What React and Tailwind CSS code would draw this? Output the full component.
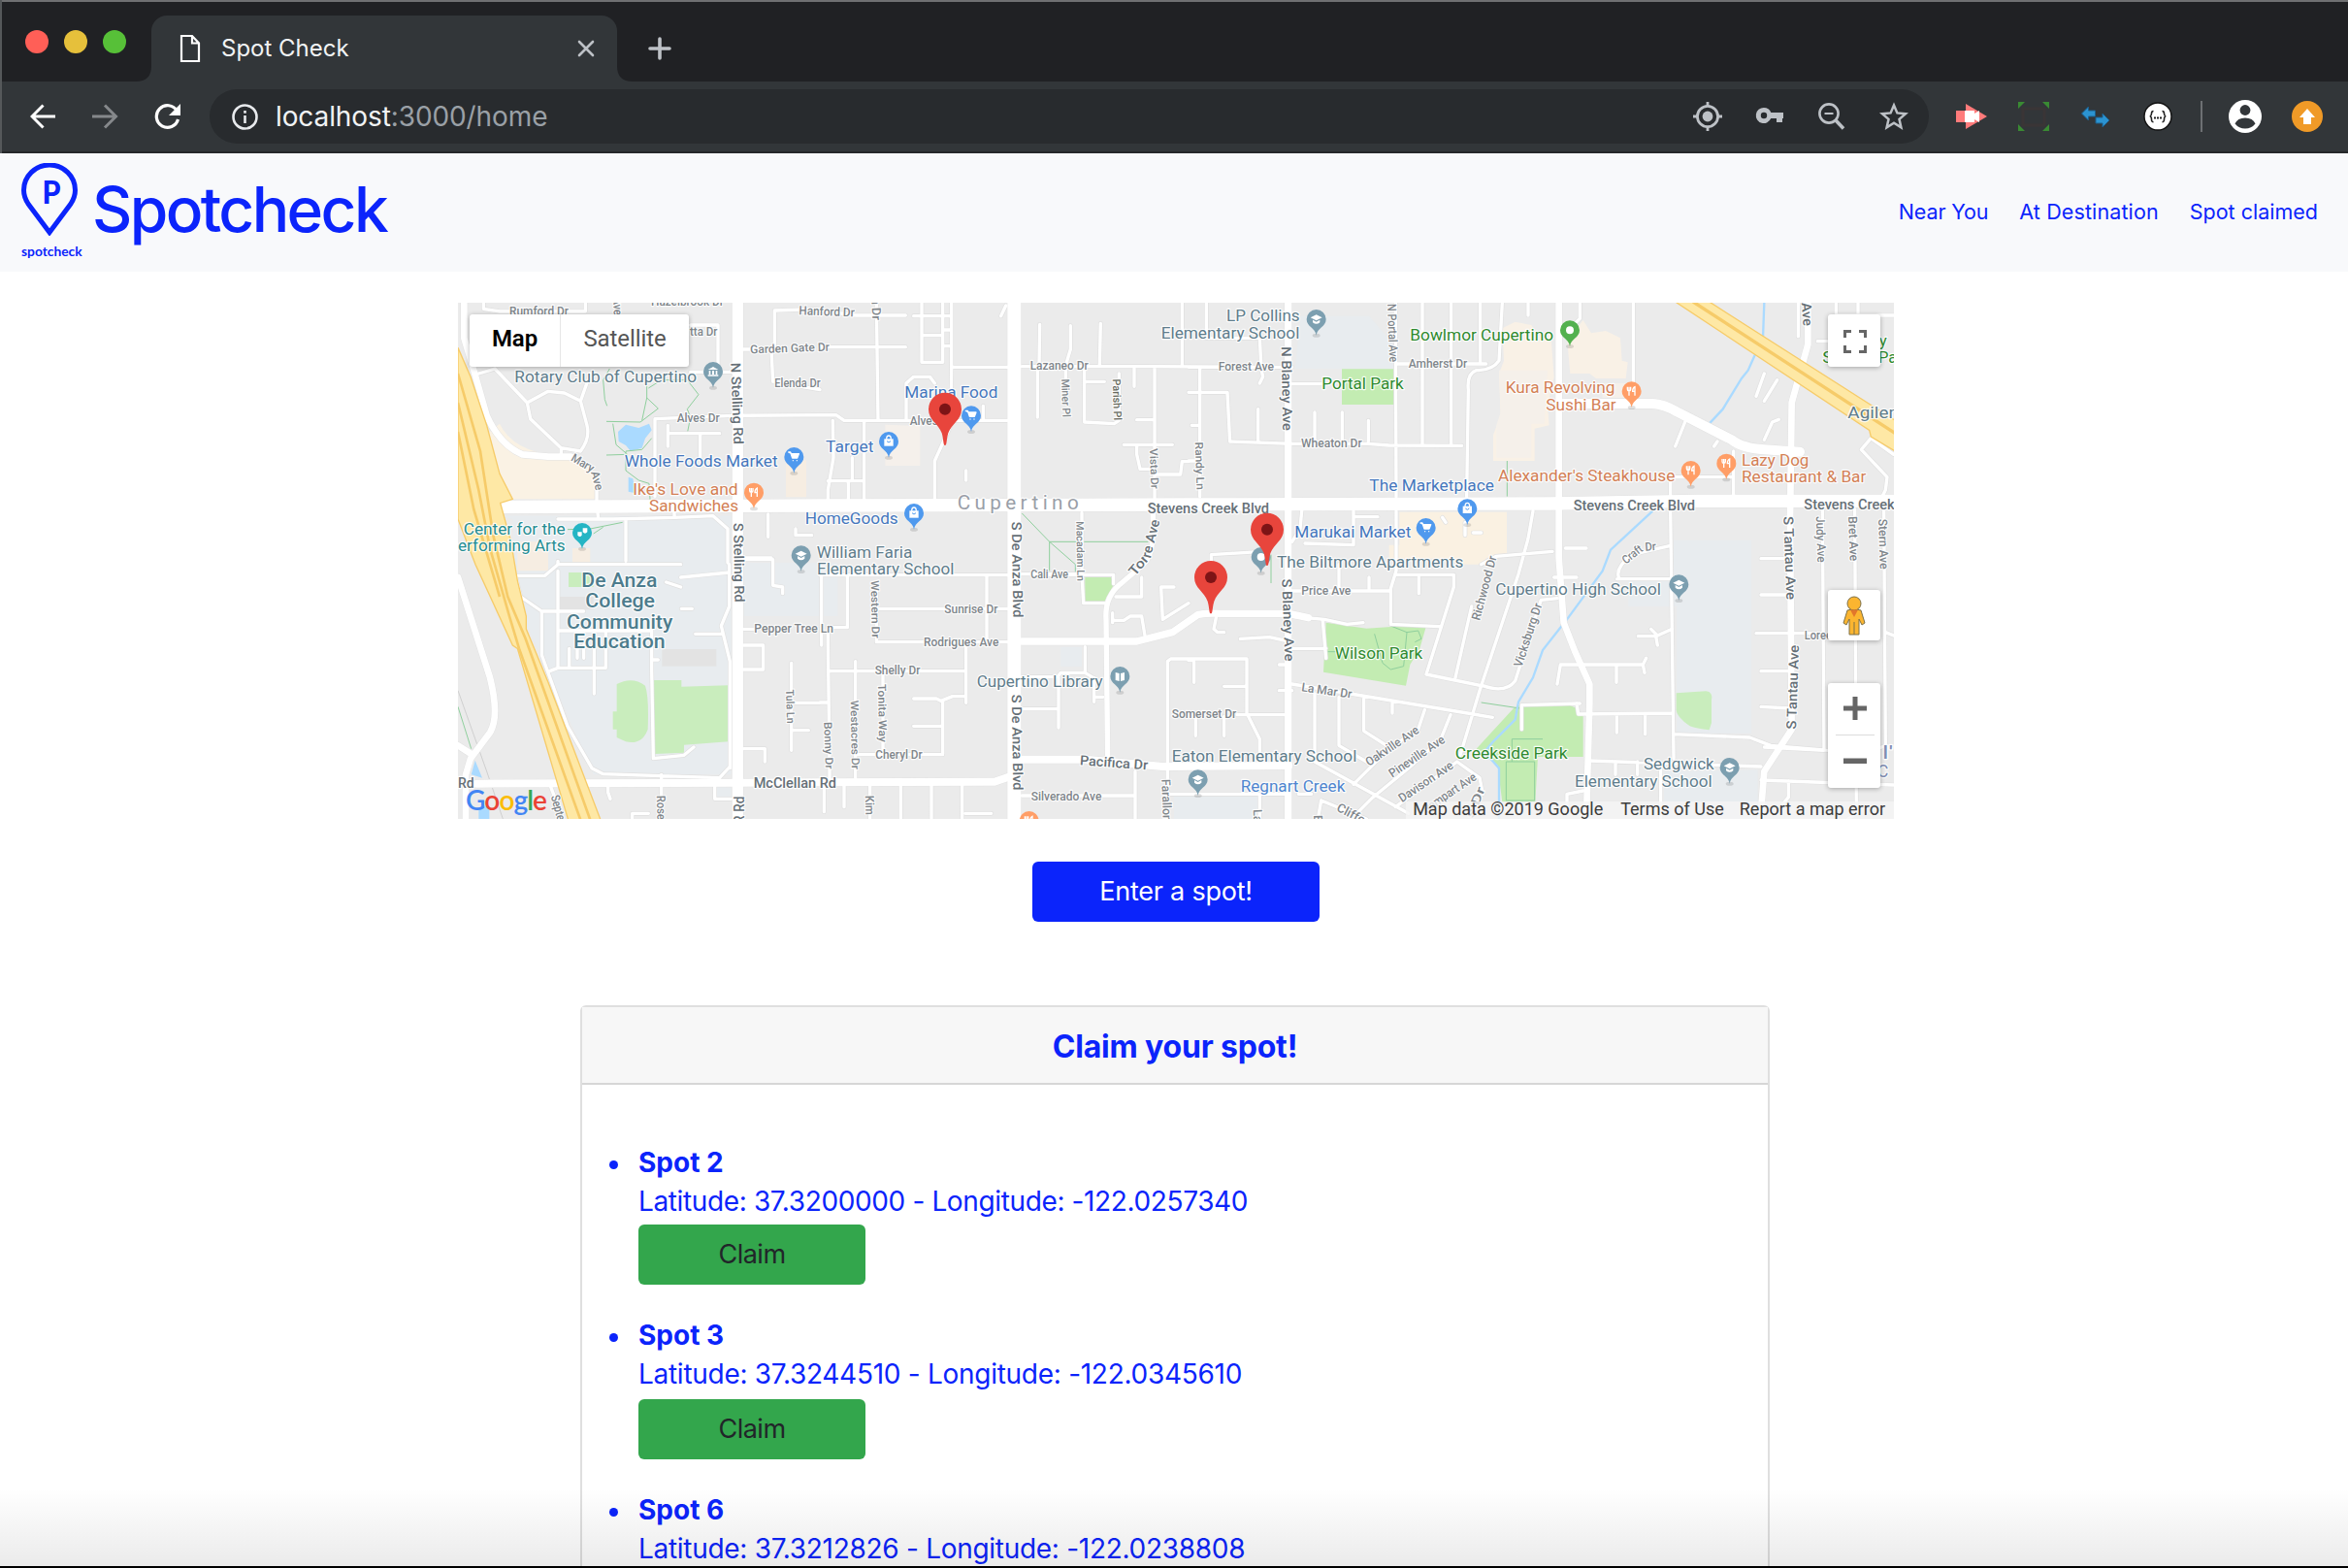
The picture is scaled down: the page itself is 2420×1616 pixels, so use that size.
import React from "react";

/* ---------- Map data, in a 3-unit-per-pixel space ---------- */

const GREY = "#80868b";
const ROAD = "#667077";
const SCHOOL = "#5f7d8c";
const SHOP = "#4577bd";
const FOOD = "#d37f55";
const PARK = "#2f8a2f";

const areas = [
  ["#e8ecef", "M150 680H865V1480H440L300 1160L200 950L190 690Z"],
  ["#e8ecef", "M905 825H1195V990H905Z M820 1512H865V1560H820Z"],
  ["#faf2e4", "M108 430L150 395Q190 480 330 495L400 500L452 560V628H190Q150 590 130 500Z"],
  ["#f6ede2", "M205 760H300V850H205Z M375 780H430V835H375Z M1035 508H1098V622H1035Z"],
  ["#aadaff", "M516 420L540 398L580 408L612 395L620 415L600 440L590 470L555 480L540 462L518 450Z M548 560L562 565L570 610L548 605Z"],
  ["#c9edbd", "M363 855H440V900H363Z M512 1200Q560 1175 600 1205Q612 1240 608 1340Q590 1390 540 1378L512 1365V1340H500V1285H512Z M622 1188H712V1208L857 1204V1378L720 1388V1412L630 1416Z"],
  ["#e3e3e3", "M652 1092H820V1145H652Z M335 930H440V970H335Z"],
  ["#aadaff", "M62 1480L74 1436L96 1490Z M85 1585L100 1575L118 1580V1617H85Z"],
  ["#f5f0eb", "M1342 398L1450 402V525H1342Z"],
  ["#c3ecb2", "M1960 870H2040L2050 890L2020 945H1960Z"],
  ["#e8ecef", "M1885 1085H1950V1145H1885Z M2235 1545H2500V1617H2235Z"],
  ["#e8ecef", "M2625 62H2838L2915 150V225H2610Z"],
  ["#c3ecb2", "M2754 226H2914V336H2754Z"],
  ["#f9f1e6", "M3250 100L3290 80L3340 90L3360 120H3400L3410 250L3390 340L3395 400L3350 410V510H3222V430L3245 370L3240 240L3255 200Z M3480 100L3500 75L3525 115L3570 108L3615 130L3620 200L3638 205L3632 255H3540L3520 240H3460L3450 130Z"],
  ["#f5f0ea", "M3240 230H3390L3380 395H3340V500H3232V400L3245 360Z M3560 270H3640V315H3560Z"],
  ["#faf1e2", "M2932 668H3264V800L3200 810V830H3110L3090 812H2900V770H2932Z"],
  ["#c3ecb2", "M2705 1010L2830 1028L2950 1020H3015L2995 1090L2965 1140L2952 1205L2697 1163Z"],
  ["#c3ecb2", "M3285 1275L3310 1262H3450L3480 1275L3500 1300V1425H3360L3352 1565H3250L3235 1450L3170 1400Z"],
  ["#e8ecef", "M3780 755H4020V1352H3790V960H3640V880H3780Z M3750 1470L4040 1465V1617H3750Z"],
  ["#c9edbd", "M3788 1228L3880 1222Q3902 1224 3897 1250V1320L3890 1342Q3850 1338 3830 1330Q3788 1300 3788 1280Z"],
];

const paths = [
  ["#8fcf9d", 3, "M490 225L470 260L475 320L482 340 M605 262L605 315L640 348L585 390L480 388 M605 315L590 385 M610 285L650 260H730L765 305L730 350L740 375L730 425 M500 395L510 460L545 490L480 492 M620 440L590 475L540 480V540L580 570L612 580L615 630 M360 722L430 720L530 700 M440 735L470 715"],
  ["#8fcf9d", 3, "M1765 672L1850 760H2155 M1850 760V850 M1850 760L1930 830V855"],
  ["#8fcf9d", 3, "M2535 800V888 M3265 510V620 M2710 1100H2740 M2855 1045L2880 1135L2905 1155L2945 1145L2955 1040L2905 1020 M2955 1040L2990 1035L3000 1060L2980 1070 M3185 1257L3305 1275 M3262 1440H3350V1560H3262Z M3280 1440V1370H3375 M21 1270L62 1400"],
  ["#aadaff", 7, "M4060 21L4056 130L4030 185L4010 230L3990 255L3932 350L3890 395 M3715 665L3585 785L3560 850L3450 1000L3375 1095L3345 1180L3300 1255L3290 1310L3220 1380L3195 1410L3240 1460L3240 1617"],
  ["#cfcfcf", 3, "M21 1220L110 1470L160 1617"],
];

const minorRoads = [
  "M100 21V40L150 48H415V21 M740 90H825V215 M890 165H1000V45L1140 40 M990 165L995 265L1140 290 M740 235H870 M85 240L135 225L235 330L300 295L350 300L400 325L430 240 M235 330L245 380L340 470L400 480Q430 440 420 400L400 325 M340 470V490 M630 620V380L870 370L1190 368L1215 385H1720",
  "M670 400V465 M670 425H830 M770 425V500 M330 690H500L690 685L810 680L855 720V825 M540 690V820 M690 680V650 M450 600V640L455 690 M980 675V745 M905 810H990 M1065 720V740H1115",
  "M200 865H290L330 830V820 M330 830H710 M200 870L215 930L280 975V1110L360 1330L435 1460L470 1478L830 1490L862 1455 M280 975H410 M330 850V1150 M330 1035H620V1160L625 1430L720 1420L750 1395 M365 1090V1150H478V1040 M305 1160L330 1150H365 M442 1050V1230 M390 1080V1120 M410 1080V1120 M860 830V960L835 1020L862 1130V1460 M835 1045H755 M712 967H745 M710 870L860 855 M665 885L710 900 M620 1125H640 M905 815H995V895L1025 900V920 M905 1030H940 M905 1080H965V1155H905 M1052 1135V1405 M1065 1258H1140 M1052 1343H1105 M905 1400H970V1440 M485 1510V1535L492 1555 M650 1480V1617 M305 1510L320 1550 M815 1500V1555H865 M560 1617V1600H610",
  "M1140 45L1250 60H1405 M1430 62H1545 M1140 158H1405 M1455 21V205H1520V21 M1455 122H1515 M1520 105H1545 M1520 155H1545 M1315 21L1320 385 M1547 21V220L1545 400L1495 510V630 M1550 220H1720 M1407 385V270L1430 250H1480L1495 270 M1180 385L1182 500L1165 600V630 M1277 390V630 M1165 572H1277 M1240 500V572 M1228 572V630 M1645 385V340 M1592 540V570 M1700 62L1715 30",
  "M1765 218H2155L2500 220 M1820 88L1818 215 M1813 215V375 M1915 92V165L1900 215V260 M2008 85L2005 215 M1958 225V390L2050 395L2065 385V240 M1965 265H2020 M2112 225V280 M2175 225V630 M2120 383H2175 M2080 460H2230 M2120 460V490L2130 535H2170 M2175 552H2255L2260 512H2280 M2260 21V218",
  "M1950 670V860H1765 M1950 860L1955 950H2020 M1820 862H2048V890 M1140 863H1720 M1145 870V1080 M1225 865V1025H1165V1070L1170 1450V1490 M1315 890V1070H1720 M1315 967H1720 M1656 867V1065 M1170 1160H1590 M1250 1130V1490 M1335 1170V1410 M1520 1415V1250L1550 1238H1590 M1592 1070V1258 M1430 1245H1500L1520 1255 M1430 1330H1515 M1255 1418H1520 M1140 1257H1165 M1153 1510V1595 M1215 1510V1580 M1295 1510V1617 M1390 1510V1617 M1485 1510V1617 M1580 1510V1617 M1590 1600H1670",
  "M1765 1178H1875L1885 1165H1960L1985 1180 M1960 1085V1165 M1878 1180V1335 M1765 1277H1878 M1988 1180V1255 M1990 1240H2015 M1765 1545H2115 M2115 1470V1617 M2215 1617V1130L2225 1122H2460V1290L2500 1370V1430 M2215 1540H2280 M2050 1003H2080L2100 990H2135L2145 1050 M2055 930H2135V870 M2195 900H2235 M2195 900L2200 1000L2280 950 M2045 980V1010",
  "M2335 21V130H2500L2505 225L2510 250L2500 270 M2280 220H2600 M2315 225V620 M2280 298H2400L2408 450L2600 457H2835L2900 462L3125 463 M2495 350V450 M2670 360V450 M2755 360V450 M2836 385V450 M2600 272H2690 M2920 21L2922 620 M3003 21V460 M3092 21V460 M3182 21V205 M2920 210H3200 M3250 21L3240 200Q3220 230 3170 230Q3140 240 3145 290L3140 620 M3330 60V21 M2290 400H2315 M2280 510H2310",
  "M2510 665V720H2560 M2630 665L2625 720L2600 760 M2790 665V770L2640 765 M2790 683H2865 M2922 665V850L2905 905V1015L3055 1022 M2922 862H3100V900L3015 1170L3185 1205 M2992 870V920 M3075 700L3065 685 M3135 700V740 M3160 732H3185 M3345 665L3330 750L3300 860L3180 1220L3120 1420 M3185 830L3230 805L3405 790 M3155 960L3105 1180 M2350 850V800L2510 790 M2590 912H2900 M2745 830V905 M2838 870V905 M2590 990L2700 1000L2770 1015L2820 1010 M2695 1005L2705 1120 M2590 1090H2705 M2440 1060L2530 1055L2590 1068 M2390 1207H2455 M2280 1127H2290 M2297 1130V1195 M2430 1295H2590 M2302 1300V1360 M2390 1300V1360 M2560 1140H2590 M2560 1220H2600 M2365 995L2358 1030L2370 1040H2390",
  "M2600 1200L3220 1303 M2670 1230V1440L2960 1600 M2745 1240V1390L2830 1440 M2822 1245V1345L2900 1395 M2910 1260V1290 M3010 1280L2990 1340L2900 1400L2790 1510 M3090 1295L3060 1370L2960 1460L2850 1550 M2920 1580L3110 1440L3180 1490L3190 1540 M2800 1600L2850 1550 M2660 1540H2620 M2280 1540H2590 M2500 1540V1617 M2690 1560L2830 1617 M2690 1560L2680 1617 M3190 1205Q3260 1230 3290 1190L3370 940L3420 935 M3310 1340V1265L3490 1260",
  "M3655 21V310 M3490 21V70L3470 90 M3815 390L3785 465 M3915 450L3905 465 M3965 480V620 M3770 560H3960 M3770 570V640 M3770 660L3780 1430 M3445 780H3510 M3605 875H3775 M3610 870Q3600 840 3650 800L3770 772 M4050 812H4140 M4050 924H4140 M4035 1043H4245 M4050 1160H4140 M4050 1270L4140 1275 M4240 660L4245 1405L4060 1395 M4340 660L4345 1600L4320 1617 M4430 660L4435 1390L4400 1405 M4165 21V125 M4225 140H4260 M4282 21V60H4460 M4350 21V60 M4060 240L4035 310 M4100 260L4060 325 M4105 382L4085 390L4060 445 M4390 440L4360 475L4440 560L4435 600L4420 630 M4390 440L4460 490 M4435 1040L4460 1050",
  "M3410 870H3480 M3710 1030L3730 1050L3775 1030 M3670 1052H3725L3730 1080 M3420 1200L3430 1140H3685L3695 1120 M3685 1140L3690 1165 M3603 1140V1195 M3480 1260L3485 1293L3775 1290 M3604 1293V1350 M3692 1293V1355 M3780 1355L4015 1365L4080 1390L4260 1405 M3520 1437L4050 1455 M3600 1440V1480 M3668 1440V1480 M3740 1450V1617 M4050 1497L4460 1512 M4135 1500V1550L4110 1580 M3450 1590V1540L3500 1530",
];

const midRoads = [
  [24, "M80 1508L1140 1504L1680 1502L1730 1485 M1765 1433H1960L2200 1455L2590 1452"],
  [20, "M40 21V130L70 230L110 370Q150 460 220 490L300 497H370 M21 870L120 1180Q150 1300 120 1350L60 1430L45 1480V1617 M21 1390L60 1415"],
  [16, "M2030 1430L2025 1000Q2020 930 2070 890L2140 830Q2175 800 2170 690V660"],
  [22, "M1765 1068H2120L2230 1040L2310 985Q2340 980 2380 982H2590L2650 995"],
  [22, "M2588 21V1617"],
  [20, "M3425 21V810L3440 1010L3475 1100L3520 1200V1260L3510 1617 M4195 21V150L4145 330L4140 700L4145 1340L4060 1470L4048 1617"],
  [30, "M3440 333H3715Q3750 335 3790 358L3960 445Q3990 470 4060 475L4170 482"],
  [34, "M886 21V1617"],
  [42, "M1741 21V1617"],
  [40, "M21 653L1140 648L2280 645L3400 642L3850 634H4461"],
];

const dr = (x, y, t, w, r = 0, s = 38) => ({ x, y, t, w, r, s, c: GREY, m: 500 });
const bl = (x, y, t, w, r = 0, s = 42) => ({ x, y, t, w, r, s, c: ROAD, m: 500 });
const poi = (x, y, t, w, c) => ({ x, y, t, w, r: 0, s: 51, c });

const labels = [
  dr(180, 60, "Rumford Dr", 183), dr(618, 29, "Hazelbrook Dr", 225), dr(506, 5, "Ave", 55, 88), dr(738, 124, "tta Dr", 85),
  dr(925, 178, "Garden Gate Dr", 245, -2, 36), dr(1075, 58, "Hanford Dr", 172, 2), dr(1000, 283, "Elenda Dr", 142), dr(698, 391, "Alves Dr", 132),
  dr(368, 508, "Mary", 76, 30, 36), dr(432, 545, "Ave", 60, 75, 36),
  bl(870, 207, "N Stelling Rd", 252, 88), bl(878, 702, "S Stelling Rd", 245, 89),
  dr(1305, 5, "n Dr", 70, 88), dr(1418, 400, "Alves Dr", 132), dr(1790, 229, "Lazaneo Dr", 180), dr(1892, 257, "Miner Pl", 118, 88, 34),
  { ...dr(2050, 257, "Parish Pl", 128, 88, 34), c: "#666a60" }, dr(2165, 472, "Vista Dr", 125, 88, 34), dr(2305, 452, "Randy Ln", 148, 88, 34),
  bl(2153, 671, "Stevens Creek Blvd", 376), bl(3470, 664, "Stevens Creek Blvd", 376), bl(4183, 659, "Stevens Creek", 280),
  bl(1738, 698, "S De Anza Blvd", 297, 89), bl(1738, 1232, "S De Anza Blvd", 297, 89), bl(2572, 157, "N Blaney Ave", 260, 89), bl(2574, 875, "S Blaney Ave", 255, 88),
  bl(2114, 868, "Tor", 70, -50), bl(2162, 812, "re Ave", 120, -76), dr(1938, 697, "Macadam Ln", 185, 89, 32),
  dr(2372, 232, "Forest Ave", 172), dr(2900, 25, "N Portal Ave", 180, 88), dr(2960, 221, "Amherst Dr", 182), dr(2628, 467, "Wheaton Dr", 188),
  bl(4180, 22, "Ave", 72, 85), bl(4125, 682, "S Tantau Ave", 258, 88), dr(4225, 682, "Judy Ave", 142, 88), dr(4325, 682, "Bret Ave", 138, 88), dr(4418, 690, "Stern Ave", 155, 88),
  dr(3632, 830, "Craft", 70, -38, 36), dr(3692, 788, "Dr", 34, -4, 36),
  dr(937, 1041, "Pepper Tree Ln", 245), dr(1040, 1217, "Tula Ln", 105, 88, 34), bl(935, 1520, "McClellan Rd", 256), bl(21, 1520, "Rd", 50),
  dr(308, 1547, "Septe", 80, 75), dr(640, 1545, "Rose", 75, 88), bl(905, 1595, "Rd", 48, -90), bl(905, 1655, "PR", 48, -90),
  dr(1303, 880, "Western Dr", 178, 89, 34), dr(1525, 980, "Sunrise Dr", 165), dr(1461, 1082, "Rodrigues Ave", 232), dr(1310, 1170, "Shelly Dr", 140),
  dr(1325, 1200, "Tonita Way", 180, 89, 34), dr(1240, 1250, "Westacres Dr", 214, 89, 34), dr(1158, 1318, "Bonny Dr", 145, 88, 34), dr(1312, 1430, "Cheryl Dr", 145), dr(1285, 1545, "Kim", 60, 88),
  dr(1792, 873, "Cali Ave", 116), dr(1793, 1560, "Silverado Ave", 218), dr(2202, 1495, "Farallone", 150, 88), bl(1943, 1450, "Pacifica Dr", 211, 4), dr(2228, 1304, "Somerset Dr", 200),
  dr(2629, 925, "Price Ave", 153), dr(2628, 1222, "La Mar Dr", 157, 8), dr(3180, 1005, "Richwood Dr", 205, -75), dr(3310, 1150, "Vicksburg Dr", 205, -72),
  dr(2838, 1455, "Oakville Ave", 190, -34), dr(2910, 1490, "Pineville Ave", 200, -34), dr(2940, 1567, "Davison Ave", 195, -34), dr(3015, 1600, "Rampart Ave", 190, -34),
  dr(3160, 1617, "s Dr", 100, -68), dr(2735, 1590, "Clifford", 130, 28), dr(2485, 1588, "La", 40, 88), dr(2672, 1606, "E", 20, 88),
  dr(4184, 1061, "Loree", 85), bl(4158, 1340, "S Tantau Ave", 260, -88),
  { x: 1565, y: 660, t: "Cupertino", w: 375, r: 0, s: 62, c: "#9a9fa8", sp: 1 },
  poi(196, 266, "Rotary Club of Cupertino", 563, SCHOOL), poi(536, 529, "Whole Foods Market", 474, SHOP),
  poi(562, 614, "Ike's Love and", 325, FOOD), poi(612, 666, "Sandwiches", 276, FOOD),
  poi(38, 737, "Center for the", 315, "#258d93"), poi(21, 790, "erforming Arts", 332, "#258d93"),
  poi(1402, 315, "Marina Food", 288, SHOP), poi(1158, 483, "Target", 148, SHOP), poi(1094, 705, "HomeGoods", 288, SHOP),
  poi(1130, 809, "William Faria", 296, SCHOOL), poi(1131, 860, "Elementary School", 424, SCHOOL),
  poi(2397, 79, "LP Collins", 227, SCHOOL), poi(2195, 131, "Elementary School", 428, SCHOOL),
  poi(2692, 289, "Portal Park", 253, PARK), poi(2965, 139, "Bowlmor Cupertino", 443, PARK),
  poi(3260, 300, "Kura Revolving", 338, FOOD), poi(3385, 353, "Sushi Bar", 217, FOOD),
  poi(3237, 573, "Alexander's Steakhouse", 547, FOOD), poi(3990, 525, "Lazy Dog", 208, FOOD), poi(3990, 576, "Restaurant & Bar", 385, FOOD),
  poi(2839, 603, "The Marketplace", 386, SHOP), poi(2608, 747, "Marukai Market", 360, SHOP), poi(2553, 840, "The Biltmore Apartments", 577, SCHOOL),
  poi(4318, 378, "Agilent", 176, SCHOOL), poi(4415, 156, "y", 24, PARK), poi(4240, 208, "Sav", 90, PARK), poi(4413, 208, "Park", 100, PARK),
  poi(3229, 925, "Cupertino High School", 512, SCHOOL), poi(1625, 1209, "Cupertino Library", 390, SCHOOL),
  poi(2228, 1440, "Eaton Elementary School", 572, SCHOOL), poi(2441, 1533, "Regnart Creek", 323, "#4f86cf"),
  poi(2732, 1123, "Wilson Park", 272, PARK), poi(3104, 1431, "Creekside Park", 348, PARK),
  poi(3687, 1464, "Sedgwick", 218, SCHOOL), poi(3474, 1517, "Elementary School", 425, SCHOOL),
  { ...poi(4425, 1430, "l'", 34, "#7f8db3"), s: 56 }, { ...poi(4410, 1487, "C", 34, "#7f8db3"), s: 56 },
  ...[["De Anza", 403, 900, 234], ["College", 415, 964, 215], ["Community", 357, 1028, 328], ["Education", 378, 1090, 284]].map(
    ([t, x, y, w]) => ({ x, y, t, w, r: 0, s: 61, c: "#4d7c8d", m: 500 })
  ),
];

const glyphs = {
  cart: <path d="M-17 -65h6l6 18h15l5 -13h-22zM-3 -39v.1M9 -39v.1" fill="#fff" stroke="#fff" strokeWidth="4" strokeLinecap="round" strokeLinejoin="round" />,
  bag: (
    <g>
      <path d="M-14 -58h28v22h-28z" fill="#fff" />
      <path d="M-7 -57q0 -11 7 -11t7 11" fill="none" stroke="#fff" strokeWidth="4" />
      <path d="M-6 -51q6 8 12 0" fill="none" stroke={"#4f99ee"} strokeWidth="3" />
    </g>
  ),
  fork: <path d="M-13 -64v8q0 5 5 5t5 -5v-8M-8 -64v27M10 -37v-27q-7 3 -7 14h7" fill="none" stroke="#fff" strokeWidth="4" />,
  cap: <path d="M-18 -55l18 -9l18 9l-18 9zM-11 -48v8q11 9 22 0v-8l-11 6z" fill="#fff" />,
  book: <path d="M-14 -62l12 3v24l-12 -3zM14 -62l-12 3v24l12 -3z" fill="#fff" />,
  bank: <path d="M-16 -56l16 -9l16 9zM-13 -53h5v12h-5zM-3 -53h6v12h-6zM8 -53h5v12h-5zM-16 -40h32v4h-32z" fill="#fff" />,
  mask: <path d="M-14 -52h13v10q-6 8 -13 0zM2 -64h14v12q-7 8 -14 0z" fill="#fff" />,
  dot: <circle cx="0" cy="-50" r="12" fill="#fff" />,
};

const BLUE = "#4f99ee";
const SLATE = "#7c9fb0";
const ORANGE = "#ff9e67";
const pins = [
  [810, 284, SLATE, "bank"], [1060, 548, BLUE, "cart"], [936, 658, ORANGE, "fork"], [405, 782, "#25b5c4", "mask"],
  [1608, 420, BLUE, "cart"], [1353, 500, BLUE, "bag"], [1431, 722, BLUE, "bag"], [1082, 852, SLATE, "cap"],
  [2675, 122, SLATE, "cap"], [3459, 156, "#53b14f", "dot"], [3650, 345, ORANGE, "fork"], [3833, 590, ORANGE, "fork"], [3943, 568, ORANGE, "fork"],
  [3142, 708, BLUE, "bag"], [3014, 767, BLUE, "cart"], [2504, 857, SLATE, "dot"], [3796, 942, SLATE, "cap"], [2068, 1226, SLATE, "book"],
  [2309, 1545, SLATE, "cap"], [3953, 1508, SLATE, "cap"], [1787, 1673, ORANGE, "fork"],
];

const markers = [[1527, 462], [2523, 834], [2349, 982]];

function MapCanvas() {
  return (
    <svg className="block h-full w-full" viewBox="21 21 4440 1596" preserveAspectRatio="none" fontFamily="Roboto, sans-serif">
      <rect x="0" y="0" width="4500" height="1650" fill="#ebebeb" />
      {areas.map(([c, d], i) => <path key={i} d={d} fill={c} />)}
      {paths.map(([c, w, d], i) => <path key={i} d={d} fill="none" stroke={c} strokeWidth={w} />)}
      <g fill="none" strokeLinecap="round" strokeLinejoin="round">
        <path d={minorRoads.join(" ")} stroke="#e0e0e0" strokeWidth="14" />
        {midRoads.map(([w, d], i) => <path key={i} d={d} stroke="#e2e2e2" strokeWidth={w + 3} />)}
        <path d={minorRoads.join(" ")} stroke="#fff" strokeWidth="10" />
        {midRoads.map(([w, d], i) => <path key={i} d={d} stroke="#fff" strokeWidth={w} />)}
      </g>
      <g stroke="#f6cb69" strokeWidth="4">
        <path fill="#fee8a5" d="M21 160L60 250L110 400L150 550L190 628L152 640L185 760L205 880L232 990V1030L300 1195L462 1620H362L205 1090L190 1080L75 830L21 690Z" />
        <path fill="none" strokeWidth="8" d="M21 240L90 480L130 740L175 930L230 1060L430 1620 M21 330L85 600L120 780L180 990L210 1090L400 1620 M21 420L70 660L150 930" />
        <path fill="#fee8a5" d="M3785 18L3890 18L4465 385V480L4390 435L4385 415Z" />
        <path fill="none" strokeWidth="10" d="M3840 18L4465 425" />
      </g>
      <g stroke="#fff" strokeOpacity=".85" strokeWidth="7" strokeLinejoin="round">
        {labels.map((l, i) => (
          <text
            key={i}
            transform={`translate(${l.r > 80 ? l.x - 5 : l.x} ${l.y}) rotate(${l.r})`}
            fontSize={l.s}
            fontWeight={l.m || 400}
            fill={l.c}
            textLength={l.w}
            lengthAdjust={l.sp ? "spacing" : "spacingAndGlyphs"}
            paintOrder="stroke"
          >
            {l.t}
          </text>
        ))}
      </g>
      {pins.map(([x, y, c, g], i) => (
        <g key={i} transform={`translate(${x} ${y})`}>
          <ellipse cx="0" cy="0" rx="12" ry="6" fill="#000" opacity=".12" />
          <path d="M0 0C-3 -24 -30 -26 -30 -50A30 30 0 1 1 30 -50C30 -26 3 -24 0 0Z" fill={c} />
          {glyphs[g]}
        </g>
      ))}
      {markers.map(([x, y], i) => (
        <g key={i} transform={`translate(${x} ${y})`}>
          <path d="M0 0C-6 0 -4 -18 -10 -38C-20 -68 -51 -78 -51 -112A51 51 0 0 1 51 -112C51 -78 20 -68 10 -38C4 -18 6 0 0 0Z" fill="#e8453c" />
          <circle cx="0" cy="-112" r="18" fill="#7d1416" />
        </g>
      ))}
    </svg>
  );
}

/* ---------- Browser chrome ---------- */

function TabStrip() {
  return (
    <div className="flex h-[84px] items-end border-t-2 border-[#6f7072] bg-[#202124]">
      <div className="flex h-[82px] w-[140px] items-center gap-4 pl-[26px]">
        <span className="h-6 w-6 shrink-0 rounded-full bg-[#ff5f57]" />
        <span className="h-6 w-6 shrink-0 rounded-full bg-[#e6c03b]" />
        <span className="h-6 w-6 shrink-0 rounded-full bg-[#57c038]" />
      </div>
      <svg className="h-4 w-4" viewBox="0 0 16 16"><path d="M16 0V16H0Q16 16 16 0Z" fill="#323639" /></svg>
      <div className="flex h-[68px] w-[480px] items-center rounded-t-2xl bg-[#323639] pl-[29px]">
        <svg className="h-[30px] w-[22px]" viewBox="0 0 22 30" fill="none" stroke="#fff" strokeWidth="2.2">
          <path d="M2 2H13L20 9.5V28H2Z M13 2V9.5H20" />
        </svg>
        <span className="ml-[21px] font-[Inter] text-[24px] leading-none whitespace-nowrap text-[#f1f3f4]">Spot Check</span>
        <svg className="mr-[23px] ml-auto h-[18px] w-[18px]" viewBox="0 0 18 18" stroke="#bdc1c6" strokeWidth="2.6" strokeLinecap="round">
          <path d="M2 2L16 16M16 2L2 16" />
        </svg>
      </div>
      <svg className="h-4 w-4" viewBox="0 0 16 16"><path d="M0 0V16H16Q0 16 0 0Z" fill="#323639" /></svg>
      <svg className="mb-[22px] ml-4 h-6 w-6" viewBox="0 0 24 24" stroke="#bdc1c6" strokeWidth="3.6" strokeLinecap="round">
        <path d="M12 2V22M2 12H22" />
      </svg>
    </div>
  );
}

function Toolbar() {
  const g = "#bdc1c6";
  return (
    <div className="flex h-[74px] items-center border-b-2 border-[#26282a] bg-[#323639]">
      <svg className="ml-[31px] h-[26px] w-[26px]" viewBox="0 0 26 26" fill="none" stroke="#fff" strokeWidth="3">
        <path d="M26 13H2.5M13.5 1.5L2 13L13.5 24.5" />
      </svg>
      <svg className="ml-[38px] h-[26px] w-[27px]" viewBox="0 0 27 26" fill="none" stroke="#85888b" strokeWidth="3">
        <path d="M0 13H24M13 1.5L24.5 13L13 24.5" />
      </svg>
      <svg className="ml-9 h-[28px] w-[30px]" viewBox="0 0 30 28" fill="none" stroke="#fff" strokeWidth="3.2">
        <path d="M24.3 8.2A11.3 11.3 0 1 0 25.5 17" />
        <path d="M28 1V13H16Z" fill="#fff" stroke="none" />
      </svg>
      <div className="ml-7 flex h-14 w-[1772px] items-center rounded-full bg-[#282b2e] pl-[23px]">
        <svg className="h-[27px] w-[27px]" viewBox="0 0 27 27" fill="none" stroke="#e8eaed" strokeWidth="2.6">
          <circle cx="13.5" cy="13.5" r="12" />
          <path d="M13.5 12V20M13.5 7V9.8" />
        </svg>
        <span className="ml-[18px] font-[Inter] text-[28px] leading-none tracking-[-0.1px] whitespace-nowrap text-[#9aa0a6]">
          <span className="text-[#f1f3f4]">localhost</span>:3000/home
        </span>
        <div className="mr-5 ml-auto flex items-center gap-8">
          <svg className="h-8 w-8" viewBox="0 0 32 32" fill="none" stroke={g} strokeWidth="2.8">
            <circle cx="16" cy="16" r="10.6" /><circle cx="16" cy="16" r="5.4" fill={g} stroke="none" />
            <path d="M16 1V6M16 26V31M1 16H6M26 16H31" />
          </svg>
          <svg className="h-8 w-8" viewBox="0 0 32 32">
            <path fillRule="evenodd" d="M10 7A8 8 0 1 0 17.2 18H23V22H29V18H30V12H17.3A8 8 0 0 0 10 7ZM10 11.8A3.2 3.2 0 1 1 10 18.2A3.2 3.2 0 1 1 10 11.8Z" fill={g} />
          </svg>
          <svg className="h-8 w-8" viewBox="0 0 32 32" fill="none" stroke={g} strokeWidth="2.6">
            <circle cx="13" cy="13" r="9.6" /><path d="M8.5 13H17.5" strokeWidth="2" /><path d="M20 20L28 28.5" strokeWidth="3.6" />
          </svg>
          <svg className="h-8 w-8" viewBox="0 0 32 32" fill="none" stroke={g} strokeWidth="2.5">
            <path d="M16 4.5L19.4 12.4L28 13.2L21.5 18.9L23.4 27.3L16 22.8L8.6 27.3L10.5 18.9L4 13.2L12.6 12.4Z" />
          </svg>
        </div>
      </div>
      <div className="ml-7 flex items-center gap-8">
        <svg className="h-8 w-8" viewBox="0 0 32 32">
          <path d="M0 10H10V3L32 16L10 29V22H0Z" fill="#ff7b7b" />
          <path d="M9 10H19V13L24 10V22L19 19V22H9Z" fill="#fff" />
        </svg>
        <svg className="h-8 w-8" viewBox="0 0 32 32">
          <path d="M0 1H7L0 8ZM32 1H25L32 8ZM0 31H7L0 24ZM32 31H25L32 24Z" fill="#3a8a33" />
          <path d="M5 8H27V25H5Z" fill="none" stroke="#3a3536" strokeWidth="3" />
        </svg>
        <svg className="h-8 w-8" viewBox="0 0 32 32" fill="#2b93d1" stroke="#1d5f8c" strokeWidth="1">
          <path d="M1.5 13L8.500 6V10H15.500V16H8.500V20Z M30 20L23 27V23H16V17H23V13Z" />
        </svg>
        <svg className="h-8 w-8" viewBox="0 0 32 32">
          <circle cx="16" cy="16" r="14" fill="#fff" stroke="#111" strokeWidth="1.4" />
          <path d="M11.5 10.5Q9.5 10.5 9.5 13T7.8 16Q9.5 16 9.5 19T11.5 21.5M20.5 10.5Q22.5 10.5 22.5 13T24.2 16Q22.5 16 22.5 19T20.5 21.5" fill="none" stroke="#222" strokeWidth="1.6" />
          <path d="M12 16.5h2v2h-2zM15 16.5h2v2h-2zM18 16.5h2v2h-2z" fill="#222" />
        </svg>
      </div>
      <span className="ml-7 h-8 w-0.5 bg-[#6d7073]" />
      <svg className="ml-[27px] h-[34px] w-[34px]" viewBox="0 0 34 34">
        <circle cx="17" cy="17" r="17" fill="#fff" />
        <circle cx="17" cy="10.5" r="5.4" fill="#323639" />
        <path d="M6.5 24.5Q9 18.5 17 18.5T27.5 24.5Q23.5 29.5 17 29.5T6.5 24.5Z" fill="#323639" />
      </svg>
      <svg className="ml-[31px] h-8 w-8" viewBox="0 0 32 32">
        <circle cx="16" cy="16" r="16" fill="#f09a27" />
        <path d="M16 8L24 17H20V24H12V17H8Z" fill="#fff" />
      </svg>
    </div>
  );
}

/* ---------- Page ---------- */

function SiteNav() {
  return (
    <header className="flex h-[122px] bg-[#f8f9fb] font-[Inter] text-[#0b24fb]">
      <div className="w-[95px] shrink-0 pt-2.5 pl-[22px]">
        <svg className="block h-[75px] w-[58px]" viewBox="0 0 58 75">
          <path d="M29 71.5L7 42Q2.5 35 2.5 28A26.5 26 0 0 1 55.500 28Q55.500 35 51 42Z" fill="none" stroke="#0b24fb" strokeWidth="5" />
          <text x="21.500" y="42" fontFamily="Lato, sans-serif" fontWeight="900" fontSize="33" fill="#0b24fb" textLength="19" lengthAdjust="spacingAndGlyphs">P</text>
        </svg>
        <div className="mt-[7px] w-fit font-[Lato] text-[13.800px] leading-[18px] font-bold whitespace-nowrap">spotcheck</div>
      </div>
      <h1 className="text-[64px] leading-[116px] font-medium tracking-[-2.600px] whitespace-nowrap">Spotcheck</h1>
      <nav className="mt-10 mr-[31px] ml-auto flex gap-8 text-[21.500px] leading-10 whitespace-nowrap">
        <a className="tracking-[-0.150px]">Near You</a>
        <a className="tracking-[0.120px]">At Destination</a>
        <a>Spot claimed</a>
      </nav>
    </header>
  );
}

function MapPanel() {
  const box = "absolute bg-white rounded-[3px] shadow-[0_1px_5px_rgba(0,0,0,0.3)]";
  return (
    <section className="relative ml-[472px] mt-8 h-[532px] w-[1480px] overflow-hidden font-[Roboto]">
      <MapCanvas />
      <div className="absolute top-3 left-3 flex h-[54px] rounded-[3px] bg-white text-[24px] leading-[51px] tracking-[-0.100px] shadow-[0_1px_5px_rgba(0,0,0,0.3)]">
        <div className="w-[94px] border-r border-[#e6e6e6] text-center font-semibold text-black">Map</div>
        <div className="w-[132px] text-center text-[#565656]">Satellite</div>
      </div>
      <div className={`${box} top-3 left-[1412px] h-[54px] w-[54px] pt-4 pl-4`}>
        <svg className="h-6 w-6" viewBox="0 0 24 24" fill="none" stroke="#666" strokeWidth="3">
          <path d="M1.500 8V1.500H8M16 1.500H22.500V8M22.500 16V22.500H16M8 22.500H1.500V16" />
        </svg>
      </div>
      <div className={`${box} top-[296px] left-[1412px] flex h-[52px] w-[54px] items-center justify-center`}>
        <svg className="h-[41px] w-[24px]" viewBox="0 0 24 41" fill="#fbb530" stroke="#7c7048" strokeWidth="1">
          <path d="M5 15Q12 12 19 15L23 28L20 30L17 24V40H7V24L4 30L1 28Z" />
          <path d="M12 27V40" />
          <circle cx="12" cy="8" r="7" />
          <path d="M8 14.500H16L12 22Z" fill="#e2762b" stroke="none" />
        </svg>
      </div>
      <div className={`${box} top-[392px] left-[1412px] flex h-[108px] w-[54px] flex-col items-center pl-0.5`}>
        <svg className="h-[53px] w-6" viewBox="0 0 24 53"><path d="M9.500 14H14.500V23.500H24V28.500H14.500V38H9.500V28.500H0V23.500H9.500Z" fill="#666" /></svg>
        <span className="h-px w-10 bg-[#dcdcdc]" />
        <svg className="h-[53px] w-6" viewBox="0 0 24 53"><path d="M0 23.500H24V29H0Z" fill="#666" /></svg>
      </div>
      <div className="absolute bottom-0.5 left-2 font-[Lato] text-[28px] leading-9 font-semibold tracking-[-0.900px]">
        <span className="text-[#4285f4]">G</span><span className="text-[#ea4335]">o</span><span className="text-[#fbbc05]">o</span>
        <span className="text-[#4285f4]">g</span><span className="text-[#34a853]">l</span><span className="text-[#ea4335]">e</span>
      </div>
      <div className="absolute right-0 bottom-0 flex h-[18px] bg-[#f5f5f5]/80 pr-[9px] text-[18px] leading-4 whitespace-nowrap text-[#3c3c3c]">
        <span className="mr-[18px] ml-[7px]">Map data ©2019 Google</span>
        <span className="mr-4">Terms of Use</span>
        <span>Report a map error</span>
      </div>
    </section>
  );
}

const spots = [
  { name: "Spot 2", lat: "37.3200000", lng: "-122.0257340", text: "tracking-[-0.370px]", gap: "mt-1" },
  { name: "Spot 3", lat: "37.3244510", lng: "-122.0345610", text: "tracking-[-0.280px]", gap: "mt-1.5" },
  { name: "Spot 6", lat: "37.3212826", lng: "-122.0238808", text: "tracking-[-0.290px]", gap: "mt-1.5" },
];

function ClaimCard() {
  return (
    <section className="mt-[86px] ml-[598px] h-[900px] w-[1226px] rounded-md border-2 border-[#dfdfdf] bg-white text-[#0b24fb]">
      <h2 className="flex h-20 items-center justify-center border-b-2 border-[#d6d6d6] bg-[#f7f7f7] pt-1 text-[32px] font-bold tracking-[-0.180px]">Claim your spot!</h2>
      <ul className="flex flex-col gap-8 pt-[60px] pl-[58px] text-[28px] leading-10">
        {spots.map((s) => (
          <li key={s.name} className="relative">
            <span className="absolute top-[18px] -left-[30px] h-[9px] w-[9px] rounded-full bg-[#0b24fb]" />
            <div className="font-bold">{s.name}</div>
            <div className={`whitespace-nowrap ${s.text}`}>Latitude: {s.lat} - Longitude: {s.lng}</div>
            <button className={`${s.gap} flex h-[62px] w-[234px] items-center justify-center rounded-md bg-[#33a64c] text-[27px] tracking-[-0.500px] text-[#212529]`}>Claim</button>
          </li>
        ))}
      </ul>
    </section>
  );
}

export default function App() {
  return (
    <div className="relative flex h-[1616px] w-[2420px] flex-col overflow-hidden bg-white">
      <TabStrip />
      <Toolbar />
      <SiteNav />
      <main className="min-h-0 flex-1 overflow-hidden font-[Inter]">
        <MapPanel />
        <button className="mt-11 ml-[1064px] flex h-[62px] w-[296px] items-center justify-center rounded-md bg-[#0b24fb] text-[27px] tracking-[-0.220px] text-white">Enter a spot!</button>
        <ClaimCard />
      </main>
      <div className="pointer-events-none absolute top-0 left-0 h-[158px] w-0.5 bg-[#55585a]" />
      <div className="pointer-events-none absolute inset-x-0 bottom-0.5 h-20 bg-gradient-to-b from-transparent to-black/8" />
      <div className="absolute inset-x-0 bottom-0 h-0.5 bg-black" />
    </div>
  );
}
